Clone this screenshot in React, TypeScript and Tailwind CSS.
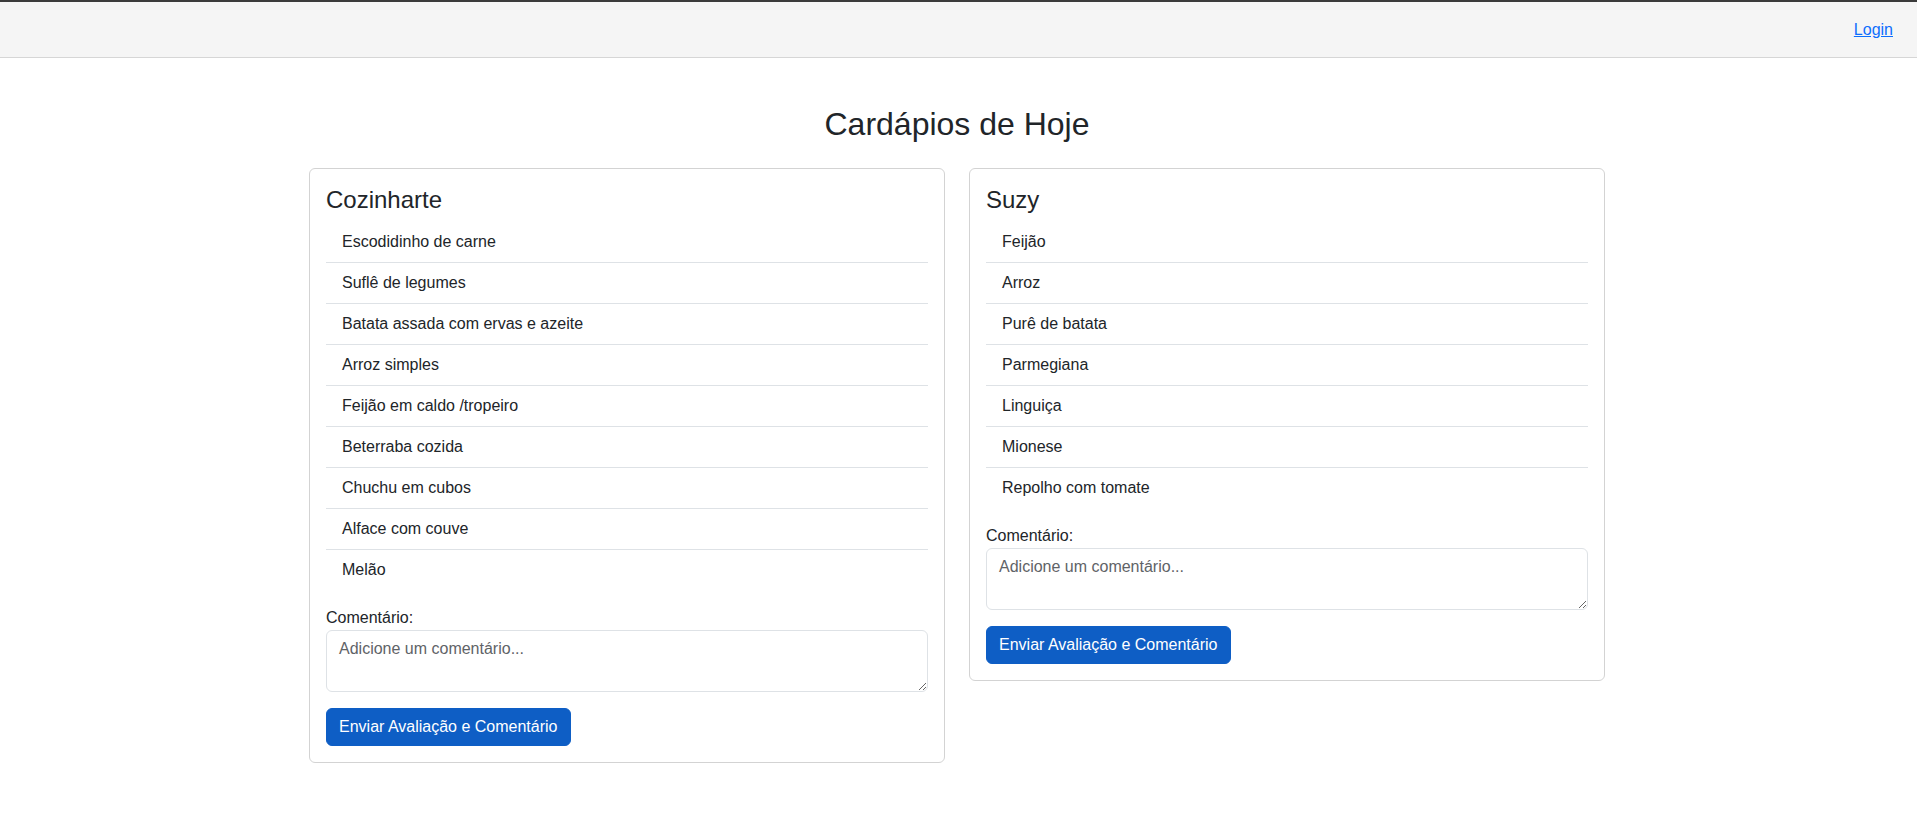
import React from "react";

type Menu = {
  name: string;
  items: string[];
};

const menus: Menu[] = [
  {
    name: "Cozinharte",
    items: [
      "Escodidinho de carne",
      "Suflê de legumes",
      "Batata assada com ervas e azeite",
      "Arroz simples",
      "Feijão em caldo /tropeiro",
      "Beterraba cozida",
      "Chuchu em cubos",
      "Alface com couve",
      "Melão",
    ],
  },
  {
    name: "Suzy",
    items: [
      "Feijão",
      "Arroz",
      "Purê de batata",
      "Parmegiana",
      "Linguiça",
      "Mionese",
      "Repolho com tomate",
    ],
  },
];

const MenuCard = ({ menu }: { menu: Menu }) => {
  return (
    <div className="border border-[#d3d3d3] rounded-[6px] bg-white p-4">
      <h4 className="text-[24px] leading-[29px] mb-2 font-normal">{menu.name}</h4>
      <ul>
        {menu.items.map((item) => (
          <li
            key={item}
            className="px-4 py-2 text-base leading-6 border-b border-[#dee2e6] last:border-b-0"
          >
            {item}
          </li>
        ))}
      </ul>
      <form className="mt-4" onSubmit={(e) => e.preventDefault()}>
        <label className="block text-base leading-6">Comentário:</label>
        <textarea
          rows={2}
          placeholder="Adicione um comentário..."
          className="block w-full h-[62px] border border-[#dee2e6] rounded-[6px] px-3 py-1.5 text-base leading-6 text-[#212529] placeholder:text-[#5f6367] focus:outline-none"
        />
        <button
          type="submit"
          className="mt-4 px-3 py-1.5 text-base leading-6 text-white bg-[#0e5ec5] border border-[#0e5ec5] rounded-[6px] cursor-pointer"
        >
          Enviar Avaliação e Comentário
        </button>
      </form>
    </div>
  );
};

export default function App() {
  return (
    <div className="min-h-screen bg-white text-[#212529] font-['Liberation_Sans',Arial,sans-serif]">
      <nav className="h-[58px] border-t-2 border-t-[#3b3b3b] border-b border-b-[#d6d6d6] bg-[#f5f5f5] flex items-center justify-end pr-6">
        <a href="#" className="text-base leading-6 text-[#0d6efd] underline">
          Login
        </a>
      </nav>
      <main className="w-[1296px] ml-[309px]">
        <h2 className="mt-[47px] mb-[25px] text-[32px] leading-[38px] text-center font-normal">
          Cardápios de Hoje
        </h2>
        <div className="grid grid-cols-2 gap-[24px] items-start">
          {menus.map((menu) => (
            <MenuCard key={menu.name} menu={menu} />
          ))}
        </div>
      </main>
    </div>
  );
}
